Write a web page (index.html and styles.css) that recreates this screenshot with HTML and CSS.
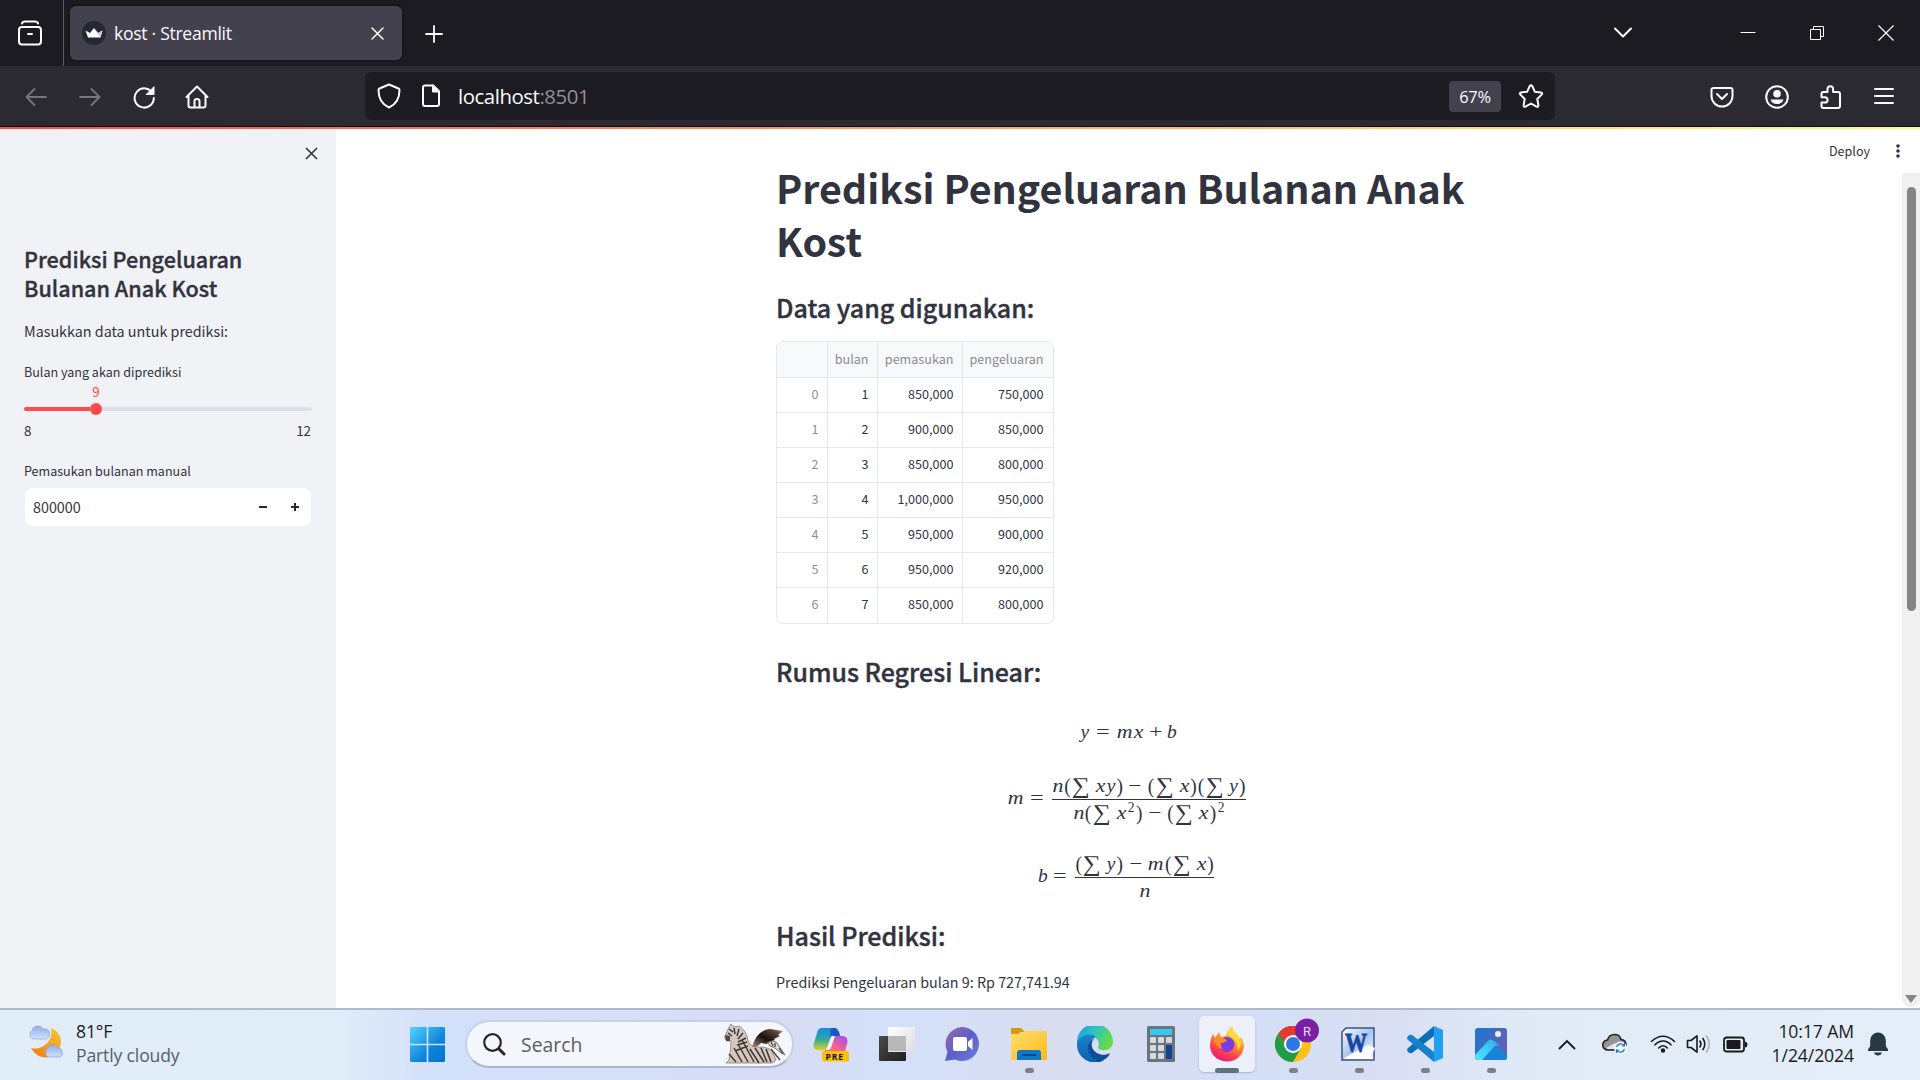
FILE: index.html
```html
<!DOCTYPE html>
<html lang="id">
<head>
<meta charset="utf-8">
<title>kost · Streamlit</title>
<link rel="stylesheet" href="styles.css">
</head>
<body>
<div class="screen">
  <div class="tabbar">
    <div class="view-btn"><svg width="24" height="26" viewBox="0 0 24 26" fill="none" stroke="#fbfbfe" stroke-width="2" stroke-linecap="round"><path d="M4 3.500Q4.500 1.500 7 1.500H17Q19.500 1.500 20 3.500"/><rect x="1" y="7" width="22" height="17.500" rx="3"/><path d="M10 14H14"/></svg></div>
    <div class="tab">
      <svg class="favicon" width="24" height="24" viewBox="0 0 24 24"><circle cx="12" cy="12" r="12" fill="#262730"/><path d="M3.500 9.500 8 12 12 7 16 12 20.500 9.500 18.500 16.500H6Z" fill="#fff"/><path d="M12 7 16 12 20.500 9.500 18.500 16.500Z" fill="#c9c9cc"/></svg>
      <span class="tab-title">kost · Streamlit</span>
      <svg width="13" height="13" viewBox="0 0 13 13" stroke="#fbfbfe" stroke-width="1.500" stroke-linecap="round"><path d="M1 1 12 12M12 1 1 12"/></svg>
    </div>
    <svg class="new-tab" width="18" height="18" viewBox="0 0 18 18" stroke="#fbfbfe" stroke-width="1.800" stroke-linecap="round"><path d="M9 1V17M1 9H17"/></svg>
    <svg class="tab-list" width="20" height="12" viewBox="0 0 20 12" fill="none" stroke="#fbfbfe" stroke-width="2" stroke-linecap="round" stroke-linejoin="round"><path d="M2 1.500 10 9.500 18 1.500"/></svg>
    <div class="win-btn"><svg width="16" height="16" viewBox="0 0 16 16" stroke="#fff"><path d="M.5 7.500H15.500"/></svg></div>
    <div class="win-btn"><svg width="14" height="14" viewBox="0 0 14 14" fill="none" stroke="#fff"><path d="M.5 3.500H10.500V13.500H.5ZM3.500 3.500V.5H13.500V10.500H10.500"/></svg></div>
    <div class="win-btn"><svg width="16" height="16" viewBox="0 0 16 16" stroke="#fff" stroke-width="1.200"><path d="M.5.5 15.500 15.500M15.500.5.5 15.500"/></svg></div>
  </div>

  <div class="toolbar">
    <div class="tool dim"><svg width="22" height="18" viewBox="0 0 22 18"><path d="M21 9H1.500M9.500 1 1.500 9 9.500 17"/></svg></div>
    <div class="tool dim"><svg width="22" height="18" viewBox="0 0 22 18"><path d="M1 9H20.500M12.500 1 20.500 9 12.500 17"/></svg></div>
    <div class="tool"><svg width="24" height="24" viewBox="0 0 24 24"><path d="M20.700 8.500A9.600 9.600 0 1 0 21.800 13"/><path d="M22 2V9.500H14.500Z" fill="#fbfbfe" stroke-width="1"/></svg></div>
    <div class="tool home"><svg width="24" height="24" viewBox="0 0 24 24"><path d="M1.500 12 12 1.500 22.500 12M3.500 10.500V20.500Q3.500 22.500 5.500 22.500H18.500Q20.500 22.500 20.500 20.500V10.500M9.500 22V16Q9.500 14 12 14 14.500 14 14.500 16V22"/></svg></div>
    <div class="urlbar">
      <svg class="shield" width="24" height="26" viewBox="0 0 24 26"><path d="M12 1.500 21.500 5.500Q22.500 6 22.500 7C22.500 15 19 21.500 12 24.500 5 21.500 1.500 15 1.500 7Q1.500 6 2.500 5.500Z"/></svg>
      <svg class="page" width="20" height="24" viewBox="0 0 20 24"><path d="M12 1.500H4Q2 1.500 2 3.500V20Q2 22 4 22H16Q18 22 18 20V7.500Z"/><path d="M12 1.500V7.500H18Z" fill="#fbfbfe"/></svg>
      <span class="url">localhost<span class="port">:8501</span></span>
      <span class="zoom">67%</span>
      <svg class="star" width="26" height="25" viewBox="0 0 26 25"><path d="M11.700 2.200Q13 .4 14.300 2.200L16.800 7.700 22.900 8.400Q25 9 23.600 10.600L19.300 15 20.400 21.200Q20.400 23.300 18.500 22.600L13 19.500 7.500 22.600Q5.600 23.300 5.600 21.200L6.700 15 2.400 10.600Q1 9 3.100 8.400L9.200 7.700Z"/></svg>
    </div>
    <div class="tool right-tools"><svg width="24" height="22" viewBox="0 0 24 22"><path d="M3.500 2H20.500Q22.500 2 22.500 4V10A10.500 10.500 0 0 1 1.500 10V4Q1.500 2 3.500 2ZM7 8 12 13 17 8"/></svg></div>
    <div class="tool nudge"><svg width="24" height="24" viewBox="0 0 24 24"><circle cx="12" cy="12" r="10.800"/><circle cx="12" cy="8.800" r="3.800" fill="#fbfbfe" stroke="none"/><path d="M5.500 14.500H18.500Q17 19 12 19 7 19 5.500 14.500Z" fill="#fbfbfe" stroke="none"/></svg></div>
    <div class="tool nudge"><svg width="22" height="26" viewBox="0 0 22 26"><path d="M3.500 8H7.500V5A2.800 2.800 0 0 1 13.100 5V8H18Q20 8 20 10V22Q20 24 18 24H3.500Q1.500 24 1.500 22V18.500H5A2.600 2.600 0 0 0 5 13.300H1.500V10Q1.500 8 3.500 8Z"/></svg></div>
    <div class="tool"><svg class="menu" width="20" height="18" viewBox="0 0 20 18"><path d="M1 2H19M1 9H19M1 16H19"/></svg></div>
  </div>

  <div class="decoration"></div>

  <div class="app">
    <aside class="sidebar">
      <svg class="side-close" width="13" height="13" viewBox="0 0 13 13" stroke="#31333f" stroke-width="1.600"><path d="M1 1 12 12M12 1 1 12"/></svg>
      <h2>Prediksi Pengeluaran<br>Bulanan Anak Kost</h2>
      <p class="body side-body">Masukkan data untuk prediksi:</p>
      <div class="label first">Bulan yang akan diprediksi</div>
      <div class="slider-value"><span>9</span></div>
      <div class="track"><div class="fill"></div><div class="thumb"></div></div>
      <div class="ticks"><span>8</span><span>12</span></div>
      <div class="label second">Pemasukan bulanan manual</div>
      <div class="number"><span class="amount">800000</span>
        <svg width="8" height="8" viewBox="0 0 8 8"><path d="M0 3H8V5H0Z" fill="#262730"/></svg>
        <svg class="plus" width="8" height="8" viewBox="0 0 8 8"><path d="M0 3H3V0H5V3H8V5H5V8H3V5H0Z" fill="#262730"/></svg>
      </div>
    </aside>

    <main class="main">
      <div class="content">
        <h1>Prediksi Pengeluaran Bulanan Anak<br>Kost</h1>
        <h3 class="h-data">Data yang digunakan:</h3>
        <div class="table">
          <div class="row head"><span></span><span>bulan</span><span>pemasukan</span><span>pengeluaran</span></div>
          <div class="row"><span>0</span><span>1</span><span>850,000</span><span>750,000</span></div>
          <div class="row"><span>1</span><span>2</span><span>900,000</span><span>850,000</span></div>
          <div class="row"><span>2</span><span>3</span><span>850,000</span><span>800,000</span></div>
          <div class="row"><span>3</span><span>4</span><span>1,000,000</span><span>950,000</span></div>
          <div class="row"><span>4</span><span>5</span><span>950,000</span><span>900,000</span></div>
          <div class="row"><span>5</span><span>6</span><span>950,000</span><span>920,000</span></div>
          <div class="row"><span>6</span><span>7</span><span>850,000</span><span>800,000</span></div>
        </div>
        <h3 class="h-rumus">Rumus Regresi Linear:</h3>
        <div class="math one"><i class="y">y</i><b class="rel">=</b><i class="m">m</i><i class="x">x</i><b class="bin">+</b><i class="bb">b</i></div>
        <div class="math two">
          <div class="lhs"><i class="m">m</i><b class="rel">=</b></div>
          <div class="frac">
            <div class="num"><i class="n">n</i><b class="par">(</b><b class="sum">∑</b><i class="x">x</i><i class="y">y</i><b class="par">)</b><b class="bin">−</b><b class="par">(</b><b class="sum">∑</b><i class="x">x</i><b class="par">)</b><b class="par">(</b><b class="sum">∑</b><i class="y">y</i><b class="par">)</b></div>
            <div class="den"><i class="n">n</i><b class="par">(</b><b class="sum">∑</b><i class="x">x</i><b class="pow">2</b><b class="par">)</b><b class="bin">−</b><b class="par">(</b><b class="sum">∑</b><i class="x">x</i><b class="par">)</b><b class="pow">2</b></div>
          </div>
        </div>
        <div class="math three">
          <div class="lhs"><i class="bb">b</i><b class="rel">=</b></div>
          <div class="frac">
            <div class="num"><b class="par">(</b><b class="sum">∑</b><i class="y">y</i><b class="par">)</b><b class="bin">−</b><i class="m">m</i><b class="par">(</b><b class="sum">∑</b><i class="x">x</i><b class="par">)</b></div>
            <div class="den"><i class="n">n</i></div>
          </div>
        </div>
        <h3 class="h-hasil">Hasil Prediksi:</h3>
        <p class="body result">Prediksi Pengeluaran bulan 9: Rp 727,741.94</p>
      </div>
      <div class="rail">
        <div class="actions"><span>Deploy</span><svg width="4" height="14" viewBox="0 0 4 14" fill="#31333f"><circle cx="2" cy="2" r="1.800"/><circle cx="2" cy="7" r="1.800"/><circle cx="2" cy="12" r="1.800"/></svg></div>
        <div class="scroll"><div class="bar"></div><svg width="12" height="8" viewBox="0 0 12 8"><path d="M0 0H12L6 8Z" fill="#858585"/></svg></div>
      </div>
    </main>
  </div>

  <footer class="taskbar">
    <svg class="weather" width="37" height="34" viewBox="0 0 37 34">
      <defs><linearGradient id="moon" x1="0" y1="1" x2=".6" y2="0"><stop offset="0" stop-color="#f07818"/><stop offset="1" stop-color="#f4c030"/></linearGradient><linearGradient id="cl" x1="0" y1="0" x2="0" y2="1"><stop offset="0" stop-color="#8faee6"/><stop offset="1" stop-color="#cfe0fa"/></linearGradient></defs>
      <path d="M23 3C31 6 35 14 32 22 28 33 12 38 3 23 14 26 26 16 23 3Z" fill="url(#moon)"/>
      <path d="M5 14A5 5 0 0 1 4 5.500 6 6 0 0 1 15 4 5 5 0 0 1 18 14Z" fill="url(#cl)" stroke="#86a4dc" stroke-width=".7"/>
      <path d="M20 32A5 5 0 0 1 19 24 6 6 0 0 1 30 23 4.800 4.800 0 0 1 32 32Z" fill="url(#cl)" stroke="#86a4dc" stroke-width=".7"/>
    </svg>
    <div class="forecast"><div>81°F</div><div class="cond">Partly cloudy</div></div>
    <svg class="start" width="35" height="35" viewBox="0 0 35 35"><defs><linearGradient id="win" x1="0" y1="0" x2="1" y2="1"><stop offset="0" stop-color="#4fd4ff"/><stop offset=".6" stop-color="#0f86dc"/><stop offset="1" stop-color="#0070d0"/></linearGradient></defs><path d="M1 0H16.700V16.700H0V1ZM18.300 0H34L35 1V16.700H18.300ZM0 18.300H16.700V35H1L0 34ZM18.300 18.300H35V34L34 35H18.300Z" fill="url(#win)"/></svg>
    <div class="search">
      <svg width="23" height="23" viewBox="0 0 23 23" fill="none" stroke="#262626" stroke-linecap="round"><circle cx="9.500" cy="9.500" r="8.300" stroke-width="2.200"/><path d="M16 16 21 21" stroke-width="3"/></svg>
      <span>Search</span>
      <svg class="zebra" width="62" height="40" viewBox="0 0 62 40">
        <defs><linearGradient id="wing" x1="0" y1="1" x2="1" y2="0"><stop offset="0" stop-color="#b08a70"/><stop offset=".45" stop-color="#15110f"/><stop offset=".8" stop-color="#5b4638"/><stop offset="1" stop-color="#c8aa90"/></linearGradient></defs>
        <path d="M2 39 5 36Q7 24 7 17L3 17Q-1 14 2 10L5 3 7 0 10 3 15 2Q22 6 24 16 26 24 36 23 48 23 50 31L52 36 48 39Z" fill="#d3c8c0" stroke="#7f6d64" stroke-width=".7"/>
        <path d="M5 5 9 8M4 9 8 12M10 4 11 10M15 5 13 12M19 9 14 15M22 14 14 18M23 18 13 21M24 22 11 27M5 30 12 38M10 24 18 38M14 20 24 38M18 16 30 38M26 25 35 39M31 24 40 38M37 24 43 38M42 25 47 38" stroke="#403630" stroke-width="1.500" fill="none"/>
        <path d="M1 11 6 12 6 17 2 17Z" fill="#4d4644"/>
        <path d="M28 23Q33 6 46 5L59 7 54 11 56 12 50 15 51 16 44 18 43 20 37 19Q33 24 28 23Z" fill="url(#wing)"/>
        <path d="M44 19Q49 15 53 19L61 31Q56 29 51 24L46 22Z" fill="#e4dcd6" stroke="#6d5e56" stroke-width=".9"/><path d="M47 18 49 22M51 19 51 23M55 24 59 30M47 25 56 36" stroke="#4a3d36" stroke-width="1.300"/>
      </svg>
    </div>
    <div class="apps">
      <div class="slot"><svg width="36" height="36" viewBox="0 0 36 36"><defs><linearGradient id="cpa" x1="0" y1="0" x2="0" y2="1"><stop offset="0" stop-color="#1789e8"/><stop offset=".5" stop-color="#2ba8a0"/><stop offset="1" stop-color="#d8d020"/></linearGradient><linearGradient id="cpb" x1="0" y1="1" x2="1" y2="0"><stop offset="0" stop-color="#f88a48"/><stop offset=".5" stop-color="#ee5c9c"/><stop offset="1" stop-color="#9850f0"/></linearGradient></defs><path d="M9 2H21Q25 2 27 9H20Q18 9 17 13L14 22Q13 24 10 24H5Q-1 24 1 17L4 7Q5 2 9 2Z" fill="url(#cpa)"/><path d="M18 2H22Q25 2 27 10H21Q18 9 17 12Z" fill="#1458c8"/><path d="M20 10H29Q36 10 34 18L32 25H7Q13 26 15 20Z" fill="url(#cpb)"/><path d="M19 10H22L18 22Q17 24 13 24Z" fill="#f4f0fb"/><rect x="9" y="25" width="27" height="10.500" rx="2" fill="#fcc200"/><text x="12.500" y="33.500" class="pre">PRE</text></svg></div>
      <div class="slot"><svg width="36" height="36" viewBox="0 0 36 36"><defs><linearGradient id="tva" x1="0" y1="0" x2="1" y2="1"><stop offset="0" stop-color="#4a4a4a"/><stop offset="1" stop-color="#202020"/></linearGradient><linearGradient id="tvb" x1="0" y1="0" x2="1" y2="1"><stop offset="0" stop-color="#fff"/><stop offset="1" stop-color="#dcdcdc"/></linearGradient></defs><rect y="10" width="27" height="25" rx="1" fill="url(#tva)"/><rect x="9" y="1" width="27" height="25" rx="1" fill="url(#tvb)"/><path d="M9 10H27V25H9Z" fill="#b9b9b9"/></svg></div>
      <div class="slot"><svg class="chat" width="36" height="36" viewBox="0 0 36 36"><defs><linearGradient id="chat" x1="0" y1="0" x2="1" y2="1"><stop offset="0" stop-color="#9a6aa8"/><stop offset=".5" stop-color="#5b5fc7"/><stop offset="1" stop-color="#6a80e0"/></linearGradient></defs><path d="M18 1A17 17 0 1 1 11 33.500L1 35 3.500 26A17 17 0 0 1 18 1Z" fill="url(#chat)"/><rect x="9" y="11" width="14" height="14" rx="2" fill="#fff"/><path d="M24 16 28.500 12V24L24 20Z" fill="#fff"/></svg></div>
      <div class="slot"><svg width="36" height="36" viewBox="0 0 36 36"><defs><linearGradient id="fold" x1="0" y1="0" x2="1" y2="1"><stop offset="0" stop-color="#ffe070"/><stop offset="1" stop-color="#fbb818"/></linearGradient></defs><path d="M0 3Q0 2 1 2H10L14 6H10L6 9H0Z" fill="#d89a08"/><path d="M0 8H9L14 5H35Q36 5 36 6V34H0Z" fill="url(#fold)"/><path d="M6 34V27Q6 24 9 24H27Q30 24 30 27V34Z" fill="#0f78c8"/><path d="M11 29H25" stroke="#094a88" stroke-width="2"/></svg><em class="dot"></em></div>
      <div class="slot"><svg width="36" height="36" viewBox="0 0 36 36"><defs><linearGradient id="ega" x1="0" y1="0" x2="1" y2=".4"><stop offset="0" stop-color="#1f9be0"/><stop offset=".5" stop-color="#2fc0cc"/><stop offset="1" stop-color="#62dc48"/></linearGradient><linearGradient id="egb" x1="0" y1="0" x2="0" y2="1"><stop offset="0" stop-color="#1884cc"/><stop offset="1" stop-color="#1060b0"/></linearGradient></defs><path d="M0 17A18 18 0 0 1 36 15C36 22 31 25 25 24 20 23 21 21 22 18 21 9 8 5 0 17Z" fill="url(#ega)"/><path d="M0 17C3 9 13 6 19 11 14 12 11 18 13 25 15 31 21 33 27 34A18 18 0 0 1 0 17Z" fill="url(#egb)"/><path d="M19 11C7 17 9 30 22 36 28 34 32 31 33 27 27 31 17 28 15 21 14 16 16 13 19 11Z" fill="#0c4f98"/></svg></div>
      <div class="slot"><svg width="28" height="36" viewBox="0 0 28 36"><rect width="28" height="36" rx="1.500" fill="#6c757e"/><rect x="3" y="3" width="22" height="6" fill="#35c8f4"/><g fill="#d4d9de"><rect x="3" y="11" width="6" height="6" rx="1"/><rect x="11" y="11" width="6" height="6" rx="1"/><rect x="19" y="11" width="6" height="6" rx="1"/><rect x="3" y="19" width="6" height="6" rx="1"/><rect x="11" y="19" width="6" height="6" rx="1"/><rect x="3" y="27" width="6" height="6" rx="1"/><rect x="11" y="27" width="6" height="6" rx="1"/></g><rect x="19" y="19" width="6" height="14" rx="1" fill="#10448c"/></svg></div>
      <div class="slot active"><svg width="36" height="36" viewBox="0 0 36 36"><defs><linearGradient id="fxa" x1=".8" y1="0" x2=".3" y2="1"><stop offset="0" stop-color="#fff04a"/><stop offset=".4" stop-color="#ff9a28"/><stop offset=".75" stop-color="#ff3c50"/><stop offset="1" stop-color="#e81878"/></linearGradient></defs><path d="M4 8 6 12 10 6 12 11Q15 10 17 10 18 4 23 0 24 6 28 8L30 12 33 12Q35 18 35 20A17 16 0 0 1 1 19Q1 13 4 8Z" fill="url(#fxa)"/><circle cx="18" cy="18.500" r="7.500" fill="#7a3be0"/><path d="M4 12Q9 10 12 11L18 14Q16 17 12 17 11 20 14 23 6 22 4 12Z" fill="#ff8b24"/><path d="M23 0Q25 6 29 9 35 16 29 25 28 12 18 9 19 3 23 0Z" fill="#ffe040" opacity=".8"/></svg><em class="dot wide"></em></div>
      <div class="slot"><svg class="chrome" width="44" height="44" viewBox="0 0 44 44"><circle cx="18" cy="26" r="18" fill="#fbc116"/><path d="M2.400 17A18 18 0 0 1 33.600 17L18 17.500Z" fill="#e33b2e"/><path d="M2.400 17A18 18 0 0 0 18 44L26 30 10 30Z" fill="#229a48"/><path d="M2.400 17 10.500 30.500 18 17Z" fill="#229a48"/><path d="M4 14.500 10.500 25.500 18 17H33.600A18 18 0 0 0 4 14.500Z" fill="#e33b2e"/><circle cx="18" cy="26" r="9" fill="#fff"/><circle cx="18" cy="26" r="7" fill="#2c78e8"/><circle cx="32" cy="12.500" r="12" fill="#7a1fa2"/><text x="32" y="17.500" class="avatar">R</text></svg><em class="dot"></em></div>
      <div class="slot"><svg class="doc" width="34" height="34" viewBox="0 0 34 34"><defs><linearGradient id="wd" x1="0" y1="0" x2="1" y2="1"><stop offset="0" stop-color="#fff"/><stop offset=".5" stop-color="#a8c4ec"/><stop offset="1" stop-color="#fff"/></linearGradient></defs><path d="M5 1H33V33H1V5Z" fill="url(#wd)" stroke="#35568f" stroke-width="1.500"/><path d="M3 31 16 24 27 18 34 21 29 32H3Z" fill="#fff"/><text x="4" y="25" class="word" textLength="22" lengthAdjust="spacingAndGlyphs">W</text></svg><em class="dot"></em></div>
      <div class="slot"><svg width="36" height="36" viewBox="0 0 36 36"><path d="M27 0 36 4V32L27 36Z" fill="#22a0f0"/><path d="M27 0V10L5 27Q3 28 1 26L0 24Q0 23 1 22Z" fill="#0c70b8"/><path d="M27 36V26L5 9Q3 8 1 10L0 12Q0 13 1 14Z" fill="#1482cc"/></svg><em class="dot"></em></div>
      <div class="slot"><svg width="32" height="32" viewBox="0 0 32 32"><defs><linearGradient id="pha" x1="0" y1="0" x2="1" y2=".6"><stop offset="0" stop-color="#1878d0"/><stop offset="1" stop-color="#6560b4"/></linearGradient><linearGradient id="phb" x1="0" y1="1" x2="1" y2="0"><stop offset="0" stop-color="#50e4ff"/><stop offset="1" stop-color="#28b0e8"/></linearGradient></defs><rect width="32" height="32" rx="3" fill="url(#pha)"/><path d="M7 32 18 20Q20 17 23 19L32 27V29Q32 32 29 32Z" fill="#1784d8"/><path d="M0 27 13 13Q16 10 19 13L25 18Q21 16 18 20L7 32H3Q0 32 0 29Z" fill="url(#phb)"/><circle cx="23" cy="6" r="3" fill="#f4eee8"/></svg><em class="dot"></em></div>
    </div>
    <div class="tray">
      <svg width="18" height="11" viewBox="0 0 18 11" fill="none" stroke="#1b1b1b" stroke-width="1.900" stroke-linecap="round"><path d="M1.500 9.500 9 2 16.500 9.500"/></svg>
      <svg class="cloud" width="26" height="22" viewBox="0 0 26 22"><path d="M6 17A5 5 0 0 1 5.500 7Q7 1.500 12.500 1.500T19 6.500Q24 7 24 12 24 17 19 17Z" fill="#969696" stroke="#222" stroke-width="1.600"/><path d="M4 15 13 10 18 16H6Z" fill="#e6e6e6"/><circle cx="18.500" cy="15" r="6.500" fill="#f4f8fc"/><path d="M14.500 14A4.300 4.300 0 0 1 22 12.500M22.500 16A4.300 4.300 0 0 1 15 17.500M22.500 10V13H20M14.500 20V17H17" fill="none" stroke="#1173c8" stroke-width="1.200"/></svg>
      <svg class="wifi" width="26" height="18" viewBox="0 0 26 18" fill="none" stroke="#1b1b1b" stroke-width="1.600" stroke-linecap="round"><path d="M1.500 6.500Q7 1.200 13 1.200T24.500 6.500M5 9.800Q8.500 6 13 6T21 9.800M8.700 13Q10.500 10.700 13 10.700T17.300 13"/><circle cx="13" cy="15.500" r="1.400" fill="#1b1b1b"/></svg>
      <svg class="sound" width="26" height="20" viewBox="0 0 26 20" fill="none" stroke="#1b1b1b" stroke-width="1.600" stroke-linecap="round" stroke-linejoin="round"><path d="M1.500 6.500H5L11 1.800V18.200L5 13.500H1.500ZM14 7Q15.800 10 14 13M17 4.500Q20.500 10 17 15.500"/><path d="M20.500 2Q26 10 20.500 18" stroke="#aab4be"/></svg>
      <svg class="battery" width="25" height="17" viewBox="0 0 25 17"><rect x="1" y="1.500" width="20" height="14" rx="2.500" fill="none" stroke="#1b1b1b" stroke-width="1.800"/><rect x="3.500" y="4" width="14" height="9" rx="1" fill="#1b1b1b"/><path d="M22 5.500Q24.500 6 24.500 8.500T22 11.500Z" fill="#1b1b1b"/></svg>
      <div class="clock"><div>10:17 AM</div><div>1/24/2024</div></div>
      <svg class="bell" width="22" height="24" viewBox="0 0 22 24" fill="#273846"><path d="M11 .5A7.800 7.800 0 0 1 18.800 8V14L21 17.500V19H1V17.500L3.200 14V8A7.800 7.800 0 0 1 11 .5ZM7 20.500H15Q14 23.500 11 23.500T7 20.500Z"/></svg>
    </div>
  </footer>
</div>
</body>
</html>
```
FILE: styles.css
```css
* { box-sizing: border-box; }
body {
  margin: 0;
  font-family: "Noto Sans CJK SC", "Noto Sans", sans-serif;
  color: #31333f;
  overflow: hidden;
}
h1, h2, h3, p { margin: 0; white-space: nowrap; }
svg { display: block; flex: none; }
.screen { width: 1920px; height: 1080px; display: flex; flex-direction: column; }
.tabbar, .toolbar, .urlbar, .zoom, .taskbar { font-family: "Open Sans", "Noto Sans", sans-serif; }

/* Browser tab strip */
.tabbar { height: 66px; background: #1c1b22; display: flex; align-items: center; }
.view-btn { width: 64px; height: 66px; padding: 20px 0 0 18px; border-right: 1px solid #5b5b66; }
.tab {
  width: 332px; height: 54px; margin-left: 6px; padding: 0 18px 0 12px;
  display: flex; align-items: center; border-radius: 6px;
  background: #42414d; box-shadow: 0 0 4px rgba(0, 0, 0, .5);
}
.tab-title { flex: 1; margin-left: 8px; color: #fbfbfe; font-size: 17.6px; letter-spacing: -.3px; line-height: 24px; }
.new-tab { margin-left: 23px; margin-top: 1px; }
.tab-list { margin-left: auto; margin-right: 80px; }
.win-btn { width: 69px; height: 66px; display: flex; align-items: center; justify-content: center; }

/* Navigation toolbar */
.toolbar { height: 60px; background: #2b2a33; display: flex; align-items: center; padding: 0 9px; }
.tool { width: 54px; display: flex; justify-content: center; padding-top: 2px; }
.home { padding-right: 2px; }
.nudge { padding-left: 2px; }
.toolbar svg { fill: none; stroke: #fbfbfe; stroke-width: 2; stroke-linecap: round; stroke-linejoin: round; }
.toolbar .dim svg { stroke: #77767e; stroke-width: 1.8; }
.toolbar .menu { margin-top: -3px; }
.urlbar {
  width: 1190px; height: 48px; margin-left: 140px; padding: 0 11px 0 12px;
  display: flex; align-items: center; background: #1c1b22; border-radius: 6px;
}
.page { margin-left: 20px; }
.url { margin-left: 17px; flex: 1; font-size: 20.4px; letter-spacing: -.45px; color: #fbfbfe; }
.port { color: #8f8f9a; }
.zoom { width: 52px; height: 31px; border-radius: 4px; background: #42414d; color: #fbfbfe; font-size: 16.4px; line-height: 31px; text-align: center; letter-spacing: -.3px; }
.star { margin-left: 17px; }
.right-tools { margin-left: auto; }
.decoration { height: 3px; border-top: 1px solid #0c0c0d; background: linear-gradient(90deg, #ff4b4b, #fffd80); }

/* App */
.app { height: 879px; display: flex; background: #fff; }
.sidebar { width: 336px; height: 879px; background: #f0f2f6; padding: 18px 24px 0; }
.side-close { margin-left: 281px; }
.sidebar h2 { margin-top: 84px; font-size: 21.6px; line-height: 29px; font-weight: 500; -webkit-text-stroke: .35px #31333f; }
.body { font-size: 14.33px; line-height: 26px; }
.side-body { margin-top: 16px; }
.label, .slider-value, .ticks { font-size: 12.55px; line-height: 20px; }
.label.first { margin-top: 18px; }
.slider-value { width: 144px; text-align: center; color: #ff4b4b; }
.slider-value, .ticks { font-size: 13.4px; line-height: 18px; padding-bottom: 2px; }
.track { height: 4px; margin-top: 5px; border-radius: 2px; background: #dadfe9; display: flex; align-items: center; }
.fill { width: 66px; height: 4px; border-radius: 2px 0 0 2px; background: #ff4b4b; }
.thumb { width: 12px; height: 12px; border-radius: 50%; background: #ff4b4b; }
.ticks { margin-top: 10px; padding-right: 1px; display: flex; justify-content: space-between; }
.label.second { margin-top: 20px; }
.number { width: 286px; height: 38px; margin: 7px 0 0 1px; padding: 0 12px 0 8px; display: flex; align-items: center; border-radius: 8px; background: #fff; }
.amount { flex: 1; font-size: 14.33px; line-height: 26px; }
.plus { margin-left: 24px; }

.main { flex: 1; display: flex; justify-content: space-between; }
.content { width: 704px; margin-left: 440px; padding-top: 31px; display: flex; flex-direction: column; }
h1 { font-size: 39.4px; line-height: 53px; font-weight: 700; }
h3 { font-size: 25px; line-height: 34px; font-weight: 500; -webkit-text-stroke: .4px #31333f; }
.h-data { margin-top: 24px; }
.table { width: 278px; height: 283px; margin-top: 17px; border: 1px solid #e6e7ea; border-radius: 7px; overflow: hidden; }
.row { height: 35px; display: grid; grid-template-columns: 51px 50px 85px 1fr; border-bottom: 1px solid #e6e7ea; font-size: 12.6px; line-height: 32px; text-align: right; }
.row span { padding-right: 8.5px; border-right: 1px solid #e6e7ea; white-space: nowrap; }
.row span:first-child { color: #8e9097; }
.row span:last-child { border-right: 0; padding-right: 9.5px; }
.row:last-child { border-bottom: 0; }
.row.head { height: 36px; background: #f8f9fb; color: #8a8c94; line-height: 33px; }
.h-rumus { margin-top: 30px; }
.math { font-family: "Liberation Serif", serif; font-size: 19.45px; line-height: 28px; display: flex; justify-content: center; }
.math i, .math b { font-weight: 400; display: flex; justify-content: center; white-space: nowrap; }
.math.one { margin-top: 28px; height: 30px; line-height: 32px; }
.math.two { margin-top: 26px; height: 54px; }
.math.three { margin-top: 24px; height: 54px; }
.lhs { display: flex; margin: 12px 2px 0 -3px; }
.num, .den { display: flex; justify-content: center; height: 27px; }
.num { border-bottom: 1px solid #31333f; height: 28px; line-height: 27px; }
.den { margin-top: -1px; }
.math .y { width: .5em; }
.math .m { width: .878em; transform: scaleX(1.12); }
.math .x { width: .572em; transform: scaleX(1.12); }
.math .bb { width: .429em; }
.math .n { width: .6em; transform: scaleX(1.12); }
.math .rel { width: 1.334em; transform: scaleX(1.25); }
.math .bin { width: 1.222em; transform: scaleX(1.2); }
.math .par { width: .389em; transform: scaleY(1.12); }
.math .sum { width: 1.223em; padding-right: .167em; transform: scale(1.3, 1.15); }
.math .pow { font-size: 13.6px; width: .64em; line-height: 18px; }
.h-hasil { margin-top: 14px; }
.result { margin-top: 17px; }

.rail { display: flex; flex-direction: column; align-items: flex-end; }
.actions { height: 44px; padding: 0 20px 0 0; display: flex; align-items: center; gap: 26px; font-size: 12.55px; line-height: 20px; }
.scroll { width: 18px; height: 834px; padding: 14px 4px 4px; background: #f0f0f0; border-radius: 0 0 8px 8px; display: flex; flex-direction: column; align-items: center; justify-content: space-between; }
.bar { width: 9px; height: 424px; border-radius: 5px; background: #858585; }

/* Taskbar */
.taskbar {
  height: 72px; padding-bottom: 2px; display: flex; align-items: center; border-top: 2px solid #b0bac8; color: #1b1b1b;
  background: linear-gradient(90deg, #e1edf8 0, #e0ecf8 340px, #d3e0fa 430px, #d5e0f8 620px, #d8dcf4 780px, #d4e0f9 900px, #d9ddf0 1060px, #d4dff6 1260px, #d9def2 1380px, #e1ebf7 1540px, #e3eef8 1920px);
}
.weather { margin: -4px 0 0 28px; }
.forecast { width: 120px; margin: -2px 0 0 11px; font-size: 17.6px; line-height: 24px; letter-spacing: -.15px; white-space: nowrap; }
.cond { color: #57606a; }
.start { margin-left: 214px; }
.search { width: 329px; height: 48px; margin-left: 20px; padding: 0 6px 0 16px; border: 2px solid #c6d1e6; border-bottom-color: #aab6cc; border-radius: 24px; background: #f4f7fe; display: flex; align-items: center; font-size: 19.4px; color: #5c5e62; }
.search span { flex: 1; margin-left: 15px; }
.apps { display: flex; margin-left: 3px; padding-left: 6px; }
.slot { width: 56px; height: 56px; margin-right: 10px; border-radius: 5px; display: flex; align-items: center; justify-content: center; position: relative; }
.active { background: #ebf0fb; box-shadow: 0 1px 2px rgba(90, 110, 150, .35); }
.dot { position: absolute; left: 24px; bottom: -1px; width: 9px; height: 5px; border-radius: 3px; background: #7d8088; }
.wide { left: 16px; width: 24px; background: #5e7480; }
.chat, .doc { margin-right: 2px; }
.chrome { margin: -8px 0 0 8px; }
.pre { font: 700 8.5px "Open Sans", sans-serif; letter-spacing: .9px; fill: #111; }
.avatar { font: 400 13px Roboto, sans-serif; fill: #f0d8f8; text-anchor: middle; }
.word { font: 700 27px "Liberation Serif", serif; fill: #1848a0; stroke: #1848a0; stroke-width: .8px; }
.tray { margin-left: auto; padding-right: 31px; display: flex; align-items: center; }
.cloud { margin-left: 26px; }
.wifi { margin-left: 22px; }
.sound { margin-left: 10px; }
.battery { margin-left: 11px; }
.clock { width: 92px; margin: -2px 0 0 14px; text-align: right; font-size: 17.6px; line-height: 24px; letter-spacing: -.1px; white-space: nowrap; }
.bell { margin-left: 13px; }
```
